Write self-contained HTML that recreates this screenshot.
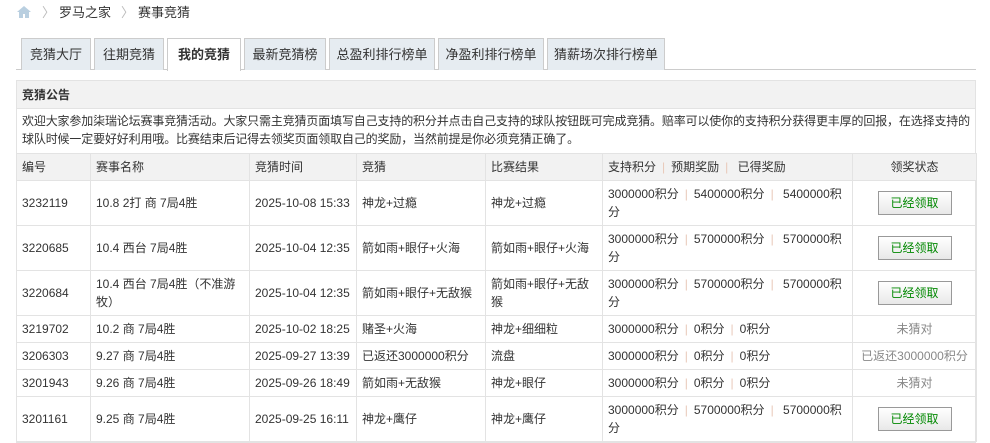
<!DOCTYPE html>
<html><head><meta charset="utf-8"><style>
*{margin:0;padding:0;box-sizing:border-box}
body{width:990px;height:439px;overflow:hidden;background:#fff;font:12px "Liberation Sans","Noto Sans CJK SC",sans-serif;color:#333;position:relative}
.bc{position:absolute;top:4px;left:16px;height:18px;line-height:18px;font-size:13px}
.sep{color:#bbb;margin:0 4px 0 10px}
.tabs{position:absolute;top:38px;left:16px;width:960px;height:32px;border-bottom:1px solid #ccc}
.tab{position:absolute;top:0;height:32px;border:1px solid #ccc;border-bottom:none;background:#e6ecf1;text-align:center;line-height:31px;font-size:13px}
.tab.a{background:#fff;height:33px;font-weight:bold;border-color:#ccc}
.box{position:absolute;top:80px;left:16px;width:960px;border:1px solid #e3e3e3}
.h{height:28px;line-height:28px;background:#f2f2f2;border-bottom:1px solid #e3e3e3;font-weight:bold;padding-left:5px;font-size:12px}
.n{padding:3px 3px 0 5px;line-height:18px;height:44px;font-size:12px;letter-spacing:-0.15px}
table{border-collapse:collapse;width:960px;margin-left:-1px;table-layout:fixed}
td{border:1px solid #e3e3e3;padding:0 5px;line-height:18px;vertical-align:middle}
tr.hd td{background:#f2f2f2;height:27px}
.s{color:#e8c8b8;margin:0 6px}
.btn{display:inline-block;width:74px;height:24px;line-height:22px;border:1px solid #999;background:linear-gradient(#fff,#e8e8e8);color:#080;text-align:center}
.c{text-align:center}
.g{color:#888}
</style></head><body>
<div class="bc"><svg width="16" height="14" viewBox="0 0 16 14" style="vertical-align:-2px"><path d="M8 1L1 7h2v6h4V9h2v4h4V7h2z" fill="#b9cfe0"/></svg><span class="sep">〉</span>罗马之家<span class="sep">〉</span>赛事竞猜</div>
<div class="tabs">
<div class="tab" style="left:5px;width:70px">竞猜大厅</div>
<div class="tab" style="left:78px;width:70px">往期竞猜</div>
<div class="tab a" style="left:151px;width:74px">我的竞猜</div>
<div class="tab" style="left:228px;width:82px">最新竞猜榜</div>
<div class="tab" style="left:313px;width:106px">总盈利排行榜单</div>
<div class="tab" style="left:422px;width:106px">净盈利排行榜单</div>
<div class="tab" style="left:531px;width:118px">猜薪场次排行榜单</div>
</div>
<div class="box">
<div class="h">竞猜公告</div>
<div class="n">欢迎大家参加柒瑞论坛赛事竞猜活动。大家只需主竞猜页面填写自己支持的积分并点击自己支持的球队按钮既可完成竞猜。赔率可以使你的支持积分获得更丰厚的回报，在选择支持的球队时候一定要好好利用哦。比赛结束后记得去领奖页面领取自己的奖励，当然前提是你必须竞猜正确了。</div>
<table>
<colgroup><col style="width:74px"><col style="width:159px"><col style="width:107px"><col style="width:129px"><col style="width:117px"><col style="width:250px"><col style="width:124px"></colgroup>
<tr class="hd"><td>编号</td><td>赛事名称</td><td>竞猜时间</td><td>竞猜</td><td>比赛结果</td><td>支持积分<span class="s">|</span>预期奖励<span class="s">|</span> 已得奖励</td><td class="c">领奖状态</td></tr>
<tr style="height:45px"><td>3232119</td><td>10.8 2打 商 7局4胜</td><td>2025-10-08 15:33</td><td>神龙+过瘾</td><td>神龙+过瘾</td><td>3000000积分<span class="s">|</span>5400000积分<span class="s">|</span> 5400000积分</td><td class="c"><span class="btn">已经领取</span></td></tr>
<tr style="height:45px"><td>3220685</td><td>10.4 西台 7局4胜</td><td>2025-10-04 12:35</td><td>箭如雨+眼仔+火海</td><td>箭如雨+眼仔+火海</td><td>3000000积分<span class="s">|</span>5700000积分<span class="s">|</span> 5700000积分</td><td class="c"><span class="btn">已经领取</span></td></tr>
<tr style="height:45px"><td>3220684</td><td>10.4 西台 7局4胜（不准游牧）</td><td>2025-10-04 12:35</td><td>箭如雨+眼仔+无敌猴</td><td>箭如雨+眼仔+无敌猴</td><td>3000000积分<span class="s">|</span>5700000积分<span class="s">|</span> 5700000积分</td><td class="c"><span class="btn">已经领取</span></td></tr>
<tr style="height:27px"><td>3219702</td><td>10.2 商 7局4胜</td><td>2025-10-02 18:25</td><td>赌圣+火海</td><td>神龙+细细粒</td><td>3000000积分<span class="s">|</span>0积分<span class="s">|</span>0积分</td><td class="c g">未猜对</td></tr>
<tr style="height:27px"><td>3206303</td><td>9.27 商 7局4胜</td><td>2025-09-27 13:39</td><td>已返还3000000积分</td><td>流盘</td><td>3000000积分<span class="s">|</span>0积分<span class="s">|</span>0积分</td><td class="c g">已返还3000000积分</td></tr>
<tr style="height:27px"><td>3201943</td><td>9.26 商 7局4胜</td><td>2025-09-26 18:49</td><td>箭如雨+无敌猴</td><td>神龙+眼仔</td><td>3000000积分<span class="s">|</span>0积分<span class="s">|</span>0积分</td><td class="c g">未猜对</td></tr>
<tr style="height:45px"><td>3201161</td><td>9.25 商 7局4胜</td><td>2025-09-25 16:11</td><td>神龙+鹰仔</td><td>神龙+鹰仔</td><td>3000000积分<span class="s">|</span>5700000积分<span class="s">|</span> 5700000积分</td><td class="c"><span class="btn">已经领取</span></td></tr>
</table>
</div>
</body></html>
